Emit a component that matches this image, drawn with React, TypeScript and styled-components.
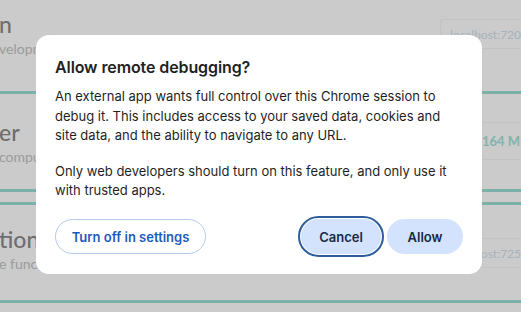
import React from "react";
import styled, { createGlobalStyle } from "styled-components";

const Global = createGlobalStyle`
  html, body { margin: 0; padding: 0; background: #ffffff; }
  body { width: 521px; height: 312px; overflow: hidden; font-family: Lato, "Liberation Sans", sans-serif; }
`;

const Page = styled.div`
  width: 521px;
  height: 312px;
  overflow: hidden;
  display: flex;
  flex-direction: column;
  background: #fefefe;
`;

const Card = styled.div<{ $h: number; $top?: boolean; $mt?: number }>`
  height: ${(p) => p.$h}px;
  margin-top: ${(p) => p.$mt ?? 0}px;
  flex-shrink: 0;
  box-sizing: border-box;
  display: grid;
  grid-template-columns: 1fr 81px;
  border-bottom: 3px solid #9adcd2;
  border-top: ${(p) => (p.$top ? "3px solid #9adcd2" : "none")};
`;

const Info = styled.div<{ $pt: number }>`
  padding-top: ${(p) => p.$pt}px;
  margin-left: -1px;
  display: flex;
  flex-direction: column;
  gap: 3px;
  white-space: nowrap;
  overflow: hidden;
`;

const Title = styled.div`
  font-family: Lato, sans-serif;
  font-size: 23px;
  line-height: 26px;
  font-weight: 500;
  color: #8a8a8a;
`;

const Sub = styled.div`
  font-family: Lato, sans-serif;
  font-size: 14px;
  line-height: 17px;
  color: #c3c3c3;
`;

const Side = styled.div<{ $pt: number }>`
  padding-top: ${(p) => p.$pt}px;
`;

const ValueBox = styled.div<{ $h: number; $teal?: boolean; $pl: number }>`
  height: ${(p) => p.$h}px;
  box-sizing: border-box;
  border: 1px solid #f3f3f3;
  border-right: none;
  border-radius: 4px 0 0 4px;
  padding-left: ${(p) => p.$pl}px;
  display: flex;
  align-items: center;
  white-space: nowrap;
  overflow: hidden;
  font-family: Lato, sans-serif;
  font-size: ${(p) => (p.$teal ? 13 : 12)}px;
  font-weight: ${(p) => (p.$teal ? 700 : 400)};
  color: ${(p) => (p.$teal ? "#9fe2d8" : "#d2dfeb")};
`;

const Scrim = styled.div`
  position: fixed;
  inset: 0;
  background: rgba(0, 0, 0, 0.2);
  display: flex;
  align-items: center;
  justify-content: center;
`;

const Dialog = styled.div`
  width: 446px;
  height: 239px;
  box-sizing: border-box;
  margin: -3px 0 0 -3px;
  background: #ffffff;
  border-radius: 13px;
  padding: 21px 19px 20px 19px;
  display: flex;
  flex-direction: column;
  font-family: Inter, "Noto Sans", sans-serif;
  color: #1f1f1f;
`;

const DialogTitle = styled.h2`
  margin: 0 0 9px 0;
  font-size: 16px;
  line-height: 22px;
  font-weight: 600;
  letter-spacing: -0.1px;
  color: #1f1f1f;
`;

const Para = styled.p`
  margin: 0 0 16px 0;
  font-size: 13px;
  line-height: 19.5px;
  font-weight: 400;
  color: #1f1f1f;
`;

const Actions = styled.div`
  margin-top: auto;
  display: flex;
  align-items: center;
  gap: 6px;
`;

const Spacer = styled.div`
  flex: 1;
`;

const Button = styled.button<{ $variant: "outline" | "tonal"; $focus?: boolean; $w: number }>`
  width: ${(p) => p.$w}px;
  height: 35px;
  box-sizing: border-box;
  border-radius: 18px;
  font-family: Inter, "Noto Sans", sans-serif;
  font-size: 13px;
  font-weight: 600;
  cursor: pointer;
  padding: 0;
  border: ${(p) => (p.$variant === "outline" ? "1px solid #b4c9ee" : "none")};
  background: ${(p) => (p.$variant === "outline" ? "#ffffff" : "#d3e3fd")};
  color: ${(p) => (p.$variant === "outline" ? "#1d5bbf" : "#15294a")};
  outline: ${(p) => (p.$focus ? "2px solid #2d5d9a" : "none")};
  outline-offset: 1px;
`;

const cards = [
  { h: 94, pt: 11, title: "n", sub: "velopment tools", value: "localhost:7200", teal: false, sidePt: 19, boxH: 30, pl: 9, mt: 0, top: false },
  { h: 98, pt: 25, title: "er", sub: "computer resources", value: "164 MB", teal: true, sidePt: 28, boxH: 38, pl: 41, mt: 0, top: false },
  { h: 101, pt: 21, title: "tion", sub: "e function", value: "localhost:7250", teal: false, sidePt: 33, boxH: 30, pl: 9, mt: 10, top: true },
];

export default function App() {
  return (
    <>
      <Global />
      <Page>
        {cards.map((c, i) => (
          <Card key={i} $h={c.h} $top={c.top} $mt={c.mt}>
            <Info $pt={c.pt}>
              <Title>{c.title}</Title>
              <Sub>{c.sub}</Sub>
            </Info>
            <Side $pt={c.sidePt}>
              <ValueBox $h={c.boxH} $teal={c.teal} $pl={c.pl}>{c.value}</ValueBox>
            </Side>
          </Card>
        ))}
      </Page>
      <Scrim>
        <Dialog role="dialog" aria-labelledby="dlg-title">
          <DialogTitle id="dlg-title">Allow remote debugging?</DialogTitle>
          <Para>
            An external app wants full control over this Chrome session to debug it. This includes
            access to your saved data, cookies and site data, and the ability to navigate to any URL.
          </Para>
          <Para>
            Only web developers should turn on this feature, and only use it with trusted apps.
          </Para>
          <Actions>
            <Button $variant="outline" $w={151}>Turn off in settings</Button>
            <Spacer />
            <Button $variant="tonal" $focus $w={80}>Cancel</Button>
            <Button $variant="tonal" $w={76}>Allow</Button>
          </Actions>
        </Dialog>
      </Scrim>
    </>
  );
}
